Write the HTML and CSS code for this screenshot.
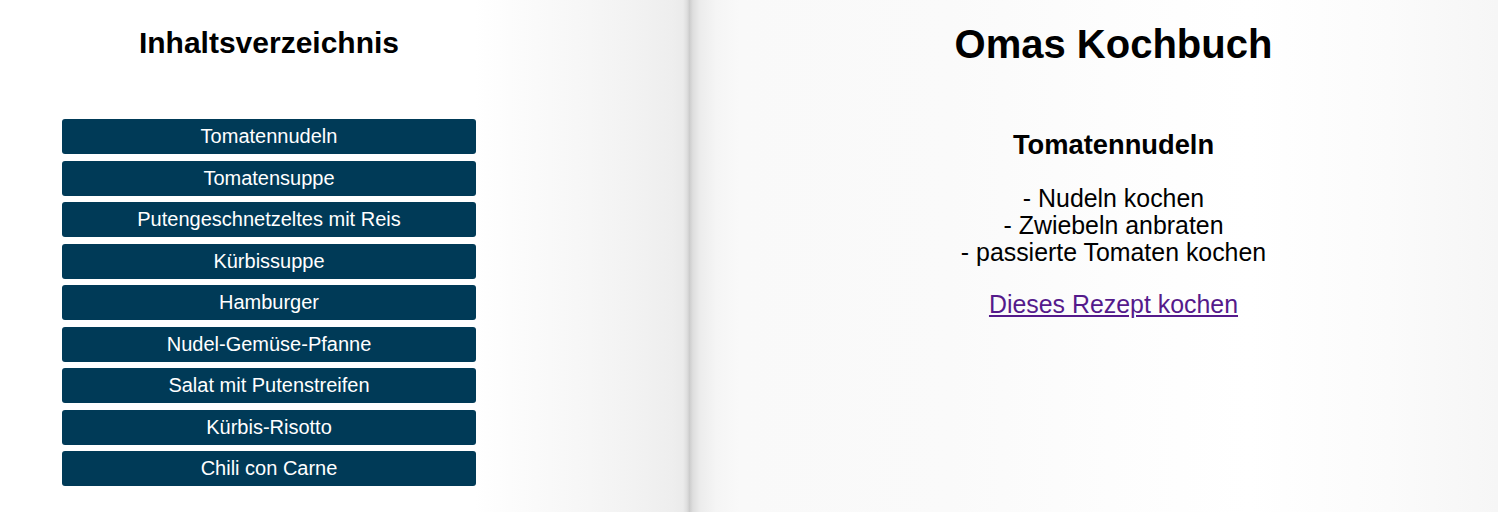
FILE: index.html
```html
<!DOCTYPE html>
<html lang="de">
<head>
<meta charset="utf-8">
<title>Omas Kochbuch</title>
<link rel="stylesheet" href="styles.css">
</head>
<body>
<div class="book">
  <section class="page page-left">
    <h2 class="toc-title">Inhaltsverzeichnis</h2>
    <nav class="toc">
      <button class="toc-item">Tomatennudeln</button>
      <button class="toc-item">Tomatensuppe</button>
      <button class="toc-item">Putengeschnetzeltes mit Reis</button>
      <button class="toc-item">Kürbissuppe</button>
      <button class="toc-item">Hamburger</button>
      <button class="toc-item">Nudel-Gemüse-Pfanne</button>
      <button class="toc-item">Salat mit Putenstreifen</button>
      <button class="toc-item">Kürbis-Risotto</button>
      <button class="toc-item">Chili con Carne</button>
    </nav>
  </section>
  <section class="page page-right">
    <h1 class="book-title">Omas Kochbuch</h1>
    <h3 class="recipe-title">Tomatennudeln</h3>
    <div class="steps">
      <div class="step">- Nudeln kochen</div>
      <div class="step">- Zwiebeln anbraten</div>
      <div class="step">- passierte Tomaten kochen</div>
    </div>
    <a class="cook-link" href="#">Dieses Rezept kochen</a>
  </section>
</div>
</body>
</html>
```

FILE: styles.css
```css
html, body {
  margin: 0;
  padding: 0;
  height: 100%;
}
body {
  font-family: "Liberation Sans", Arial, sans-serif;
  color: #000;
  overflow: hidden;
}
.book {
  display: flex;
  height: 512px;
}
.page {
  box-sizing: border-box;
  height: 100%;
}
.page-left {
  width: 690px;
  flex: none;
  padding: 26px 0 0 62px;
  background: linear-gradient(to right,
    #ffffff 0px, #ffffff 475px, #fcfcfc 510px, #f6f6f6 590px,
    #f1f1f1 645px, #eeeeee 672px, #ebebeb 683px, #dedede 687px, #c9c9c9 690px);
}
.toc-title {
  width: 414px;
  margin: 0;
  font-size: 30px;
  line-height: 34px;
  font-weight: bold;
  text-align: center;
}
.toc {
  width: 414px;
  margin-top: 59px;
  display: flex;
  flex-direction: column;
  gap: 6.5px;
}
.toc-item {
  display: block;
  width: 100%;
  height: 35px;
  margin: 0;
  padding: 0;
  border: none;
  border-radius: 3px;
  background: #003a57;
  color: #ffffff;
  font-family: "Liberation Sans", Arial, sans-serif;
  font-size: 20px;
  line-height: 35px;
  text-align: center;
  cursor: pointer;
}
.page-right {
  flex: 1;
  padding: 21px 0 0 39px;
  display: flex;
  flex-direction: column;
  align-items: center;
  text-align: center;
  background: linear-gradient(to right,
    #cfcfcf 0px, #dedede 3px, #ececec 10px, #f5f5f5 26px, #f9f9f9 50px,
    #fafafa 260px, #fdfdfd 420px, #ffffff 560px, #fbfbfb 700px, #f6f6f6 808px);
}
.book-title {
  margin: 0;
  font-size: 40px;
  line-height: 46px;
  font-weight: bold;
}
.recipe-title {
  margin: 62px 0 0;
  font-size: 27.3px;
  line-height: 31px;
  font-weight: bold;
}
.steps {
  margin-top: 25px;
  font-size: 24.9px;
  line-height: 27px;
}
.cook-link {
  margin-top: 24.5px;
  font-size: 24.9px;
  line-height: 27px;
  color: #551a8b;
  text-decoration: underline;
}
```
